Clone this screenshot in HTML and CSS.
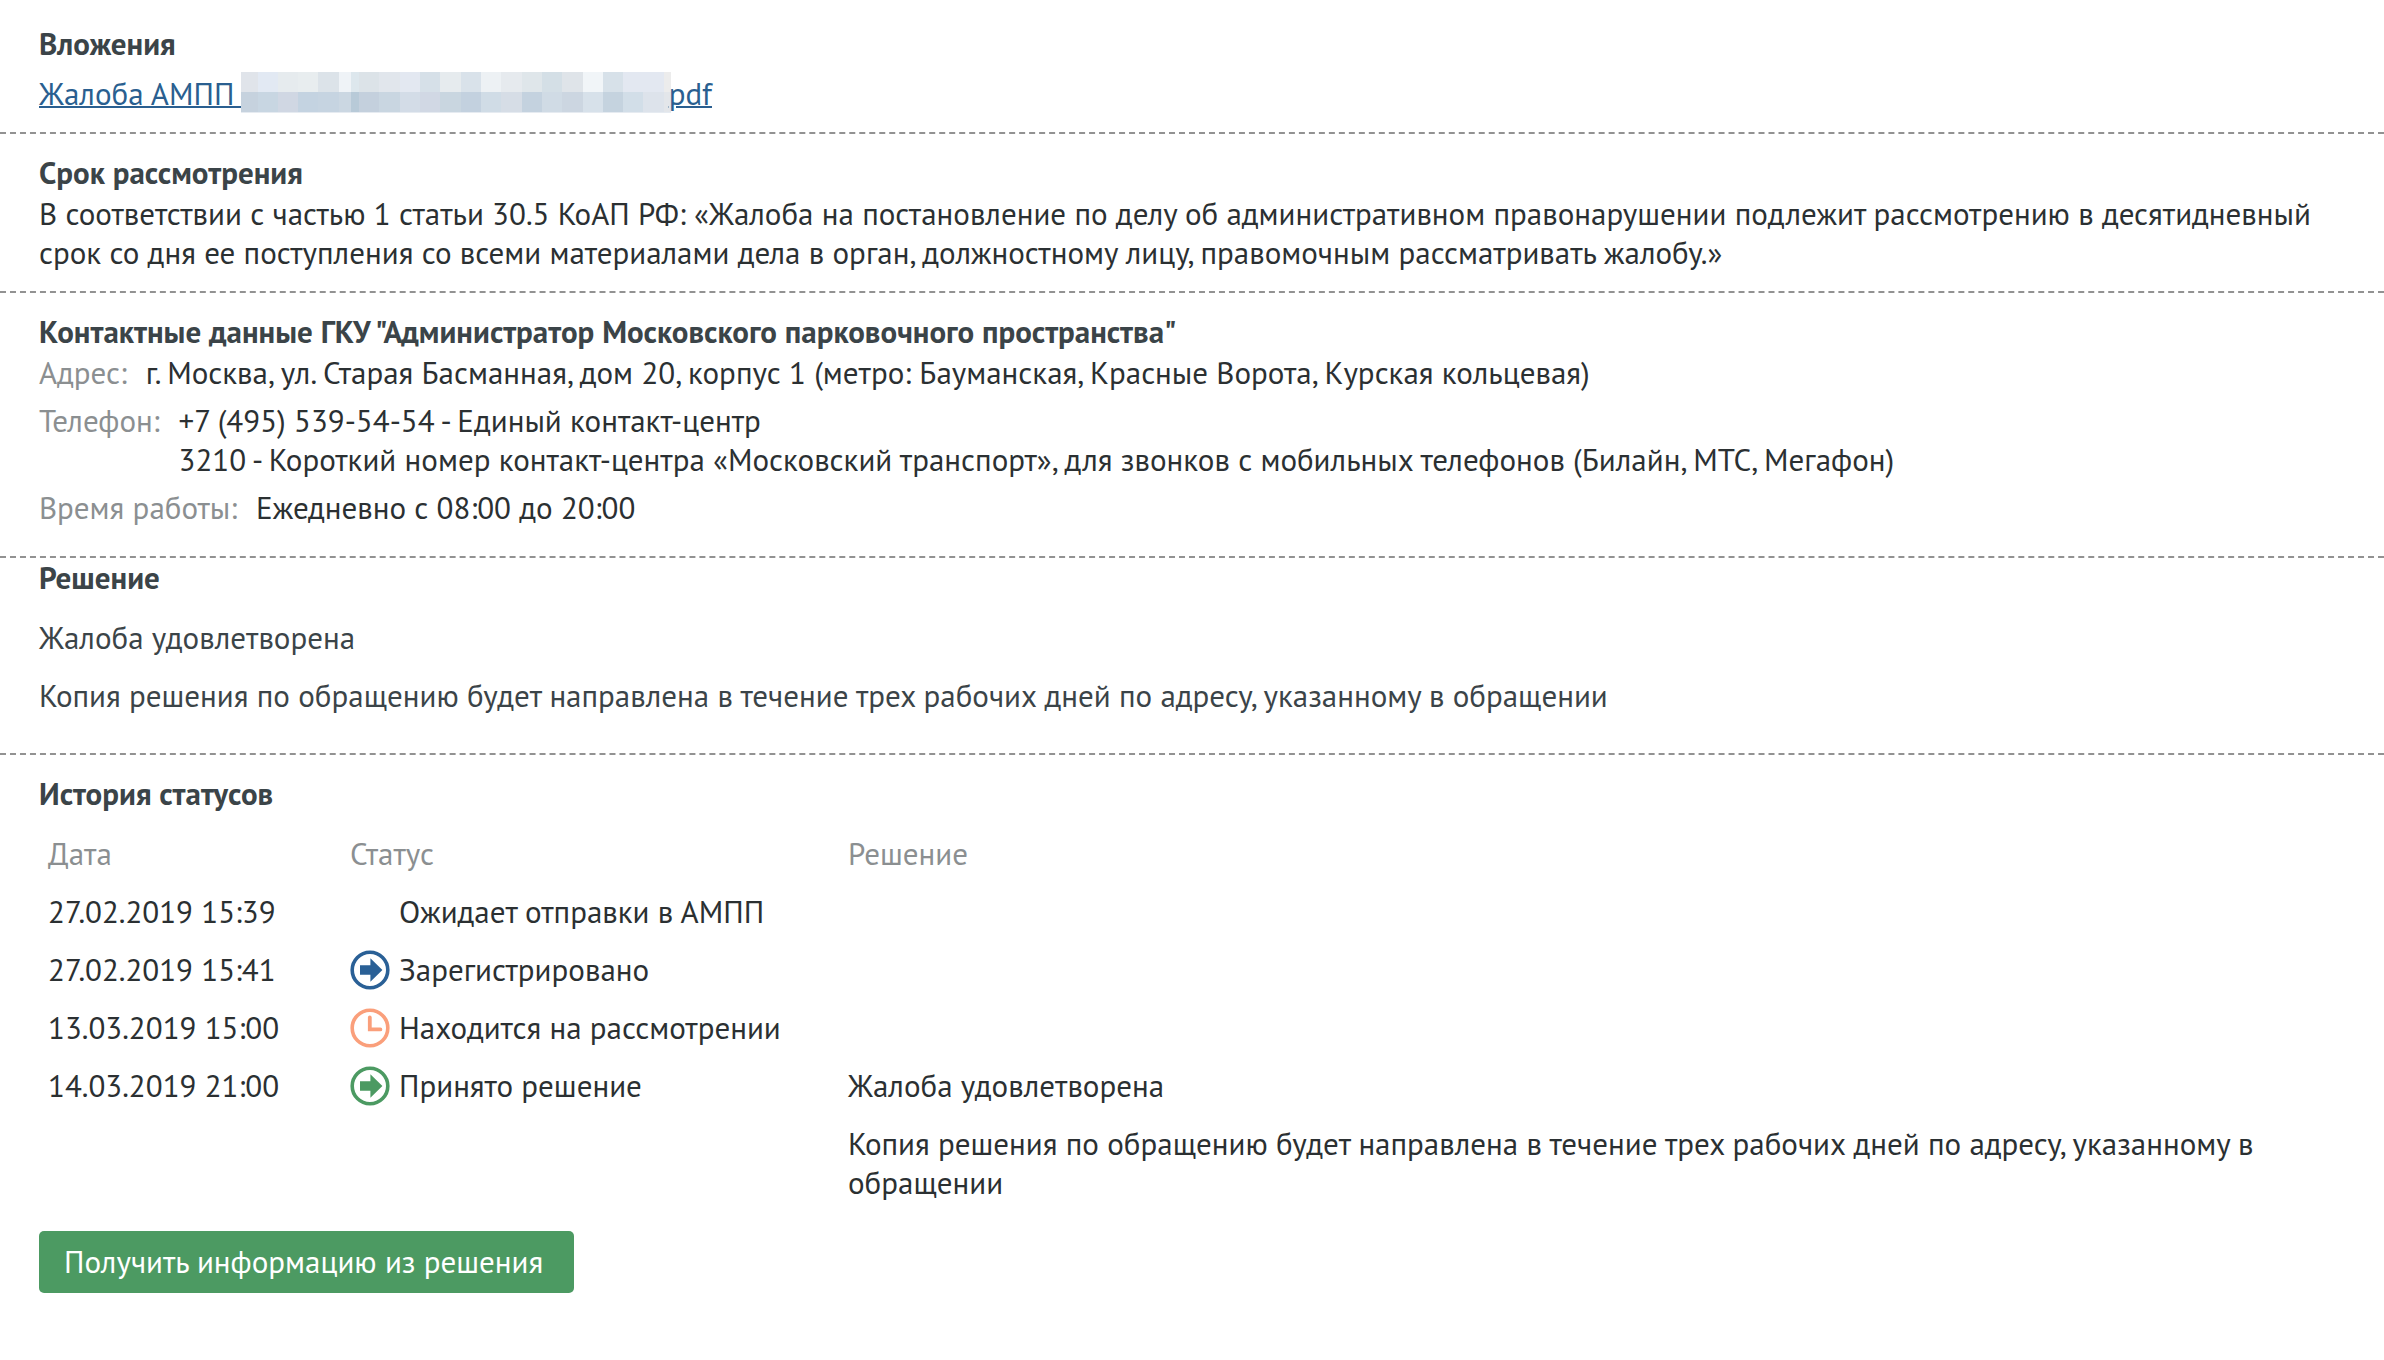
FILE: index.html
```html
<!DOCTYPE html>
<html lang="ru">
<head>
  <meta charset="utf-8">
  <meta name="viewport" content="width=device-width, initial-scale=1">
  <title>Жалоба АМПП</title>
  <link rel="stylesheet" href="styles.css">
</head>
<body>
  <svg class="sprite" aria-hidden="true">
    <symbol id="icon-arrow" viewBox="0 0 40 40">
      <circle cx="20" cy="20" r="17.8" fill="none" stroke="currentColor" stroke-width="3.6"/>
      <path d="M10 15.2h10.4V8.2L32.4 20 20.4 31.8v-7H10z" fill="currentColor"/>
    </symbol>
    <symbol id="icon-clock" viewBox="0 0 40 40">
      <circle cx="20" cy="20" r="17.8" fill="none" stroke="currentColor" stroke-width="3.6"/>
      <path d="M19.8 9.4v12h10.6" fill="none" stroke="currentColor" stroke-width="3.8" stroke-linecap="round"/>
    </symbol>
  </svg>
  <main>
    <section class="block block--files">
      <h2>Вложения</h2>
      <a class="file" href="#file">Жалоба АМПП <svg class="redacted" viewBox="0 0 430 41" role="img" aria-label="Скрыто" shape-rendering="crispEdges">
        <path fill="#e6ebf1" d="M0 0h430v41H0z"/>
        <path fill="#e0e4ea" d="M0 0h17v20H0z"/><path fill="#e2e9f3" d="M17 0h20v20H17z"/><path fill="#e6ebee" d="M37 0h20v20H37z"/><path fill="#e8edef" d="M57 0h20v20H57z"/><path fill="#dce3e9" d="M77 0h21v20H77z"/><path fill="#eff3f7" d="M98 0h12v20H98z"/><path fill="#dde7ed" d="M110 0h8v20h-8z"/><path fill="#dce3e8" d="M118 0h20v20h-20z"/><path fill="#e1e6ec" d="M138 0h21v20h-21z"/><path fill="#e3e8f1" d="M159 0h20v20h-20z"/><path fill="#d6e0e8" d="M179 0h20v20h-20z"/><path fill="#e6ebee" d="M199 0h21v20h-21z"/><path fill="#d9e2ea" d="M220 0h20v20h-20z"/><path fill="#edf1f4" d="M240 0h20v20h-20z"/><path fill="#e6eaee" d="M260 0h21v20h-21z"/><path fill="#dfe6ea" d="M281 0h20v20h-20z"/><path fill="#d4dfe6" d="M301 0h20v20h-20z"/><path fill="#dfe4e9" d="M321 0h21v20h-21z"/><path fill="#f1f5f8" d="M342 0h20v20h-20z"/><path fill="#d7e1e9" d="M362 0h20v20h-20z"/><path fill="#e3e8f1" d="M382 0h41v20h-41z"/><path fill="#ececec" d="M423 0h7v20h-7z"/>
        <path fill="#c6d2de" d="M0 20h17v20H0z"/><path fill="#c8d6e2" d="M17 20h20v20H17z"/><path fill="#d0d7e3" d="M37 20h20v20H37z"/><path fill="#c4d3e1" d="M57 20h20v20H57z"/><path fill="#c6d4e1" d="M77 20h21v20H77z"/><path fill="#cbd7e2" d="M98 20h12v20H98z"/><path fill="#b8cad8" d="M110 20h8v20h-8z"/><path fill="#c4d0dd" d="M118 20h20v20h-20z"/><path fill="#c9d6e1" d="M138 20h21v20h-21z"/><path fill="#d3dce7" d="M159 20h20v20h-20z"/><path fill="#d1d8e4" d="M179 20h20v20h-20z"/><path fill="#c9d6e0" d="M199 20h21v20h-21z"/><path fill="#c3d1df" d="M220 20h20v20h-20z"/><path fill="#d0dce6" d="M240 20h20v20h-20z"/><path fill="#d6dde6" d="M260 20h21v20h-21z"/><path fill="#c4d2df" d="M281 20h20v20h-20z"/><path fill="#d0dbe5" d="M301 20h20v20h-20z"/><path fill="#ccd6e1" d="M321 20h21v20h-21z"/><path fill="#d7e1ea" d="M342 20h20v20h-20z"/><path fill="#c5d3df" d="M362 20h20v20h-20z"/><path fill="#d2dee8" d="M382 20h20v20h-20z"/><path fill="#dde3eb" d="M402 20h21v20h-21z"/><path fill="#e3e6ea" d="M423 20h7v20h-7z"/>
      </svg>pdf</a>
    </section>

    <section class="block">
      <h2>Срок рассмотрения</h2>
      <p>В соответствии с частью 1 статьи 30.5 КоАП РФ: «Жалоба на постановление по делу об административном правонарушении подлежит рассмотрению в десятидневный срок со дня ее поступления со всеми материалами дела в орган, должностному лицу, правомочным рассматривать жалобу.»</p>
    </section>

    <section class="block block--contacts">
      <h2>Контактные данные ГКУ "Администратор Московского парковочного пространства"</h2>
      <dl class="contacts">
        <div class="contact">
          <dt>Адрес:</dt>
          <dd>г. Москва, ул. Старая Басманная, дом 20, корпус 1 (метро: Бауманская, Красные Ворота, Курская кольцевая)</dd>
        </div>
        <div class="contact">
          <dt>Телефон:</dt>
          <dd>+7 (495) 539-54-54 - Единый контакт-центр<br>3210 - Короткий номер контакт-центра «Московский транспорт», для звонков с мобильных телефонов (Билайн, МТС, Мегафон)</dd>
        </div>
        <div class="contact">
          <dt>Время работы:</dt>
          <dd>Ежедневно с 08:00 до 20:00</dd>
        </div>
      </dl>
    </section>

    <section class="block block--decision">
      <h2>Решение</h2>
      <p>Жалоба удовлетворена</p>
      <p>Копия решения по обращению будет направлена в течение трех рабочих дней по адресу, указанному в обращении</p>
    </section>

    <section class="block block--history">
      <h2>История статусов</h2>
      <table class="history">
        <thead>
          <tr><th class="col-date" scope="col">Дата</th><th class="col-status" scope="col">Статус</th><th scope="col">Решение</th></tr>
        </thead>
        <tbody>
          <tr>
            <td>27.02.2019 15:39</td>
            <td><div class="status"><span class="icon"></span>Ожидает отправки в АМПП</div></td>
            <td></td>
          </tr>
          <tr>
            <td>27.02.2019 15:41</td>
            <td><div class="status"><svg class="icon icon--blue" aria-hidden="true"><use href="#icon-arrow"/></svg>Зарегистрировано</div></td>
            <td></td>
          </tr>
          <tr>
            <td>13.03.2019 15:00</td>
            <td><div class="status"><svg class="icon icon--orange" aria-hidden="true"><use href="#icon-clock"/></svg>Находится на рассмотрении</div></td>
            <td></td>
          </tr>
          <tr>
            <td>14.03.2019 21:00</td>
            <td><div class="status"><svg class="icon icon--green" aria-hidden="true"><use href="#icon-arrow"/></svg>Принято решение</div></td>
            <td>
              <p>Жалоба удовлетворена</p>
              <p>Копия решения по обращению будет направлена в течение трех рабочих дней по адресу, указанному в обращении</p>
            </td>
          </tr>
        </tbody>
      </table>
      <button class="button" type="button">Получить информацию из решения</button>
    </section>
  </main>
</body>
</html>
```
FILE: styles.css
```css
* {
  box-sizing: border-box;
}

body {
  margin: 0;
  background: #fff;
  color: #2b3032;
  font: 31px/39px "PT Sans", "Noto Sans", sans-serif;
}

h2,
p,
dl,
dd {
  margin: 0;
}

h2 {
  margin-bottom: 2px;
  color: #3b4448;
  font-size: 31px;
  font-weight: 700;
}

.sprite {
  display: block;
  width: 0;
  height: 0;
}

.block {
  padding: 19px 39px;
  border-bottom: 2px dashed #929292;
}

.block--files {
  padding-top: 24px;
}

.block--files h2 {
  margin-bottom: 11px;
}

.file {
  display: block;
  color: #2a5f90;
  text-decoration-thickness: 2px;
}

.redacted {
  width: 430px;
  height: 41px;
  margin: -2px -2px -2px -2px;
  vertical-align: -6px;
}

.block--contacts {
  padding-bottom: 29px;
}

.contacts {
  display: grid;
  gap: 9px;
}

.contact {
  display: flex;
  gap: 19px;
}

.contact dt {
  flex: none;
  color: #8b8f91;
}

.block--decision {
  display: grid;
  gap: 19px;
  padding-top: 0;
  padding-bottom: 38px;
  color: #3b4448;
}

.block--history {
  padding-bottom: 66px;
  border-bottom: 0;
}

.history {
  width: 100%;
  border-collapse: collapse;
  table-layout: fixed;
}

.history th,
.history td {
  padding: 19px 9px 0;
  text-align: left;
  vertical-align: top;
}

.history th {
  color: #8b8f91;
  font-weight: 400;
}

.history p + p {
  margin-top: 19px;
}

.col-date {
  width: 302px;
}

.col-status {
  width: 498px;
}

.status {
  display: flex;
  gap: 9px;
}

.icon {
  flex: none;
  width: 40px;
  height: 40px;
  margin-bottom: -1px;
}

.icon--blue {
  color: #2a6096;
}

.icon--orange {
  color: #fa9f7b;
}

.icon--green {
  color: #4c9a62;
}

.button {
  display: block;
  margin-top: 29px;
  padding: 11px 31px 12px 25px;
  border: 0;
  border-radius: 5px;
  background: #4c9a62;
  color: #fff;
  font: inherit;
  cursor: pointer;
}
```
